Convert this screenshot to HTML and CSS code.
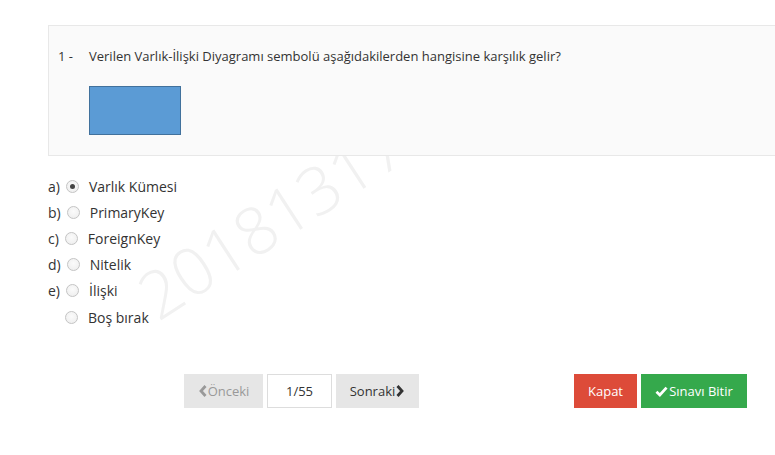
FILE: index.html
```html
<!DOCTYPE html>
<html lang="tr">
<head>
<meta charset="utf-8">
<link rel="stylesheet" href="styles.css">
</head>
<body>
<div class="page">
  <div class="watermark">20181317</div>
  <div class="question">
    <div class="q-text"><span class="q-no">1 -</span><span>Verilen Varlık-İlişki Diyagramı sembolü aşağıdakilerden hangisine karşılık gelir?</span></div>
    <div class="shape"></div>
  </div>
  <ul class="options">
    <li><span class="opt-key">a)</span><span class="radio checked"></span><span class="opt-label">Varlık Kümesi</span></li>
    <li><span class="opt-key">b)</span><span class="radio"></span><span class="opt-label">PrimaryKey</span></li>
    <li><span class="opt-key">c)</span><span class="radio"></span><span class="opt-label">ForeignKey</span></li>
    <li><span class="opt-key">d)</span><span class="radio"></span><span class="opt-label">Nitelik</span></li>
    <li><span class="opt-key">e)</span><span class="radio"></span><span class="opt-label">İlişki</span></li>
    <li><span class="opt-key blank"></span><span class="radio"></span><span class="opt-label">Boş bırak</span></li>
  </ul>
  <div class="nav">
    <div class="pager">
      <button class="btn btn-gray disabled"><svg class="chev" viewBox="0 0 8 12" width="8" height="12"><path d="M6.5 1 L2 6 L6.5 11" fill="none" stroke="currentColor" stroke-width="2.8"/></svg>Önceki</button>
      <span class="page-no">1/55</span>
      <button class="btn btn-gray">Sonraki<svg class="chev" viewBox="0 0 8 12" width="8" height="12"><path d="M1.5 1 L6 6 L1.5 11" fill="none" stroke="currentColor" stroke-width="2.8"/></svg></button>
    </div>
    <div class="actions">
      <button class="btn btn-red">Kapat</button>
      <button class="btn btn-green"><svg class="check" viewBox="0 0 14 12" width="13" height="11"><path d="M1.5 6.2 L5.2 9.8 L12.5 1.8" fill="none" stroke="#fff" stroke-width="3"/></svg>Sınavı Bitir</button>
    </div>
  </div>
</div>
</body>
</html>
```

FILE: styles.css
```css
* { box-sizing: border-box; }
html, body { margin: 0; padding: 0; background: #fff; }
body {
  font-family: "Open Sans", "Noto Sans", sans-serif;
  font-size: 13px;
  color: #333;
  overflow: hidden;
}
.page {
  position: relative;
  width: 775px;
  height: 455px;
  padding: 25px 0 0 48px;
}
.watermark {
  position: absolute;
  left: 162px;
  top: 262px;
  font-size: 66px;
  font-weight: 300;
  color: #f1f1f1;
  transform: rotate(-33deg);
  transform-origin: 0 100%;
  line-height: 1;
  white-space: nowrap;
  z-index: 0;
}
.question {
  position: relative;
  z-index: 1;
  background: #fafafa;
  border: 1px solid #e8e8e8;
  border-right: none;
  height: 131px;
  padding: 20px 0 0 9px;
}
.q-text { display: flex; line-height: 20px; }
.q-no { width: 31px; }
.shape {
  margin: 20px 0 0 31px;
  width: 92px;
  height: 49px;
  background: #5b9bd5;
  border: 1px solid #41719c;
}
.options {
  position: relative;
  z-index: 1;
  list-style: none;
  margin: 17px 0 0;
  padding: 0;
  font-size: 14px;
}
.options li {
  display: flex;
  align-items: center;
  height: 26.2px;
}
.opt-key { display: inline-block; margin-right: 6px; }
.opt-key.blank { width: 11px; }
.radio {
  display: inline-block;
  flex: none;
  width: 13px;
  height: 13px;
  border-radius: 50%;
  border: 1px solid #c4c4c4;
  background: radial-gradient(circle at 50% 40%, #fbfbfb 0%, #ececec 100%);
  margin-right: 10px;
  position: relative;
}
.radio.checked::after {
  content: "";
  position: absolute;
  left: 3px;
  top: 3px;
  width: 5px;
  height: 5px;
  border-radius: 50%;
  background: #444;
}
.nav {
  position: relative;
  z-index: 1;
  display: flex;
  justify-content: space-between;
  margin-top: 44px;
  padding-left: 136px;
  padding-right: 28px;
}
.pager, .actions { display: flex; gap: 4px; }
.btn {
  font-family: inherit;
  font-size: 13px;
  height: 34px;
  border: none;
  border-radius: 0;
  padding: 0 12px;
  display: inline-flex;
  align-items: center;
  cursor: pointer;
}
.btn-gray { background: #e6e6e6; color: #333; width: 80px; justify-content: center; }
.btn-gray.disabled { color: #999; width: 79px; }
.btn-gray + .page-no + .btn-gray { width: 83px; }
.chev { margin: 0 1px; }
.page-no {
  width: 65px;
  height: 34px;
  border: 1px solid #ddd;
  background: #fff;
  display: inline-flex;
  align-items: center;
  justify-content: center;
}
.btn-red { background: #dd4b39; color: #fff; width: 63px; justify-content: center; }
.btn-green { background: #35a94c; color: #fff; width: 106px; justify-content: center; }
.check { margin-right: 1px; }
```
